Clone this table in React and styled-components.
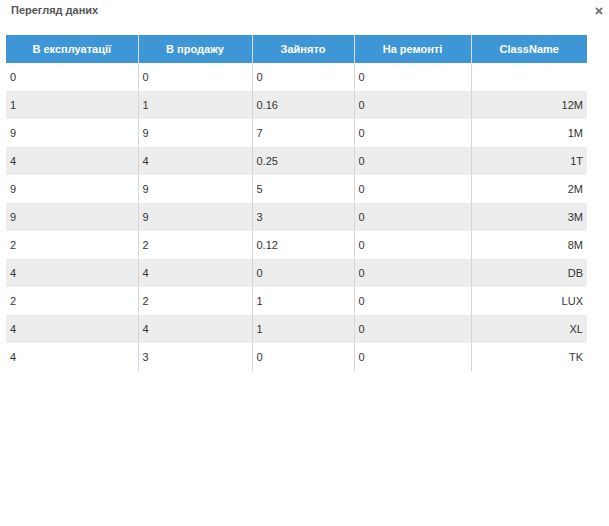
import React from "react";
import styled, { createGlobalStyle } from "styled-components";

const Global = createGlobalStyle`
  html, body { margin: 0; padding: 0; background: #fff; }
  body { font-family: "Liberation Sans", Arial, sans-serif; }
`;

const Dialog = styled.div`
  width: 609px;
  height: 526px;
  box-sizing: border-box;
  padding: 0 22px 0 6px;
  display: flex;
  flex-direction: column;
`;

const TitleBar = styled.div`
  height: 35px;
  display: flex;
  align-items: flex-start;
  justify-content: space-between;
  margin-right: -22px;
`;

const Title = styled.div`
  margin-top: 4px;
  padding-left: 5px;
  font-size: 11px;
  font-weight: bold;
  color: #555;
  line-height: 12px;
`;

const Close = styled.button`
  border: none;
  background: none;
  padding: 0;
  margin: 7px 6px 0 0;
  width: 8px;
  height: 8px;
  display: flex;
  cursor: pointer;
`;

const Table = styled.table`
  width: 581px;
  border-collapse: collapse;
  table-layout: fixed;
  font-size: 11px;
`;

const Th = styled.th`
  height: 28px;
  padding: 0 4px;
  background: #3f96d6;
  color: #fff;
  font-weight: bold;
  text-align: center;
  border-left: ${(p) => (p.$first ? "none" : "1px solid #d8e2ea")};
`;

const Tr = styled.tr`
  background: ${(p) => (p.$alt ? "#ededed" : "#fff")};
`;

const Td = styled.td`
  height: 28px;
  padding: 0 4px;
  color: #333;
  text-align: ${(p) => (p.$right ? "right" : "left")};
  border-left: ${(p) => (p.$first ? "none" : "1px solid #d6d6d6")};
  white-space: nowrap;
`;

const cols = [
  { label: "В експлуатації", w: 132 },
  { label: "В продажу", w: 114 },
  { label: "Зайнято", w: 102 },
  { label: "На ремонті", w: 117 },
  { label: "ClassName", w: 116 },
];

const rows = [
  ["0", "0", "0", "0", ""],
  ["1", "1", "0.16", "0", "12M"],
  ["9", "9", "7", "0", "1M"],
  ["4", "4", "0.25", "0", "1T"],
  ["9", "9", "5", "0", "2M"],
  ["9", "9", "3", "0", "3M"],
  ["2", "2", "0.12", "0", "8M"],
  ["4", "4", "0", "0", "DB"],
  ["2", "2", "1", "0", "LUX"],
  ["4", "4", "1", "0", "XL"],
  ["4", "3", "0", "0", "TK"],
];

export default function App() {
  return (
    <>
      <Global />
      <Dialog>
        <TitleBar>
          <Title>Перегляд даних</Title>
          <Close aria-label="close">
            <svg width="8" height="8" viewBox="0 0 8 8">
              <path d="M1 1 L7 7 M7 1 L1 7" stroke="#777" strokeWidth="1.8" />
            </svg>
          </Close>
        </TitleBar>
        <Table>
          <colgroup>
            {cols.map((c) => (
              <col key={c.label} style={{ width: c.w }} />
            ))}
          </colgroup>
          <thead>
            <tr>
              {cols.map((c, i) => (
                <Th key={c.label} $first={i === 0}>
                  {c.label}
                </Th>
              ))}
            </tr>
          </thead>
          <tbody>
            {rows.map((r, ri) => (
              <Tr key={ri} $alt={ri % 2 === 1}>
                {r.map((v, ci) => (
                  <Td key={ci} $first={ci === 0} $right={ci === 4}>
                    {v}
                  </Td>
                ))}
              </Tr>
            ))}
          </tbody>
        </Table>
      </Dialog>
    </>
  );
}
